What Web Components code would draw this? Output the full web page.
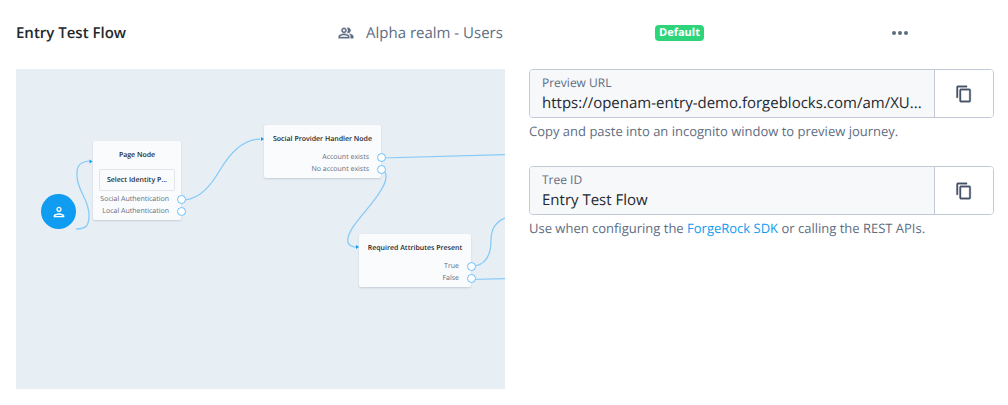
<!DOCTYPE html>
<html lang="en">
<head>
<meta charset="utf-8">
<title>Entry Test Flow</title>
<style>
  body {
    margin: 0;
    background: #fff;
    color: #23282e;
    font: 13px/20px "Open Sans", "Noto Sans", sans-serif;
    text-rendering: geometricPrecision;
  }
</style>
</head>
<body>
<journey-page></journey-page>

<script>
const define = (name, html, setup) => {
  const template = document.createElement('template');
  template.innerHTML = html;
  customElements.define(name, class extends HTMLElement {
    constructor() {
      super();
      this.attachShadow({ mode: 'open' }).append(template.content.cloneNode(true));
    }
    connectedCallback() {
      if (setup) setup(this, this.shadowRoot);
    }
  });
};

define('journey-header', `
  <style>
    :host {
      display: grid;
      grid-template-columns: 322fr 317fr 237fr 102fr;
      align-items: center;
      height: 36px;
      color: #5e6d82;
    }
    h1 { margin: 0; font-size: 15px; font-weight: 600; color: #23282e; white-space: nowrap; }
    .realm { display: flex; align-items: center; gap: 12px; font-size: 15px; white-space: nowrap; }
    svg { display: block; fill: currentColor; }
    .badge {
      display: block;
      width: fit-content;
      padding: 0 4px;
      border-radius: 4px;
      background: #2ed47a;
      color: #fff;
      font-size: 11px;
      line-height: 16px;
      font-weight: 700;
    }
    button { display: block; padding: 0; border: 0; background: none; color: inherit; }
  </style>
  <h1><slot name="title"></slot></h1>
  <div class="realm">
    <svg width="16" height="16" viewBox="0 0 24 24" aria-hidden="true"><path stroke="currentColor" stroke-width=".5" d="M16.67 13.13C18.04 14.06 19 15.32 19 17v3h4v-3c0-2.18-3.57-3.47-6.33-3.87zM15 12c2.21 0 4-1.79 4-4s-1.79-4-4-4c-.47 0-.91.1-1.33.24C14.5 5.27 15 6.58 15 8s-.5 2.73-1.33 3.76c.42.14.86.24 1.33.24zM9 12c2.21 0 4-1.79 4-4s-1.79-4-4-4-4 1.79-4 4 1.79 4 4 4zm0-6c1.1 0 2 .9 2 2s-.9 2-2 2-2-.9-2-2 .9-2 2-2zM9 13c-2.67 0-8 1.34-8 4v3h16v-3c0-2.66-5.33-4-8-4zm6 5H3v-.99C3.2 16.29 6.3 15 9 15s5.8 1.29 6 2v1z"/></svg>
    <slot name="realm"></slot>
  </div>
  <div><span class="badge"><slot name="status"></slot></span></div>
  <div><button type="button" aria-label="More actions">
    <svg width="16" height="16" viewBox="0 0 16 16"><circle cx="2" cy="8" r="2"/><circle cx="8" cy="8" r="2"/><circle cx="14" cy="8" r="2"/></svg>
  </button></div>
`);

define('node-outcome', `
  <style>
    :host { display: flex; align-items: center; justify-content: flex-end; gap: 8px; height: 12px; margin-right: -5px; font-size: 7px; line-height: 12px; color: #5e6d82; white-space: nowrap; }
    span { padding-top: 2px; }
    i { box-sizing: border-box; width: 9px; height: 9px; border: 1px solid #6fc0f7; border-radius: 50%; background: #fff; }
  </style>
  <span><slot></slot></span><i></i>
`);

define('flow-node', `
  <style>
    :host {
      display: block;
      box-sizing: border-box;
      padding: 8px 0 3px;
      border-radius: 2px;
      background: #fafbfc;
      box-shadow: 0 1px 2px rgba(60, 80, 105, .2);
      text-align: center;
    }
    h2 { margin: 0; font-size: 7px; line-height: 14px; font-weight: 600; white-space: nowrap; }
    .outcomes { margin-top: 4px; }
    ::slotted([slot=step]) {
      display: block;
      box-sizing: border-box;
      height: 22px;
      margin: 6px 6px 0;
      border: 1px solid #e1e5ea;
      border-radius: 2px;
      font-size: 7px;
      line-height: 22px;
      font-weight: 600;
      white-space: nowrap;
    }
    :host(.page) .outcomes { margin-top: 2px; }
  </style>
  <h2><slot name="title"></slot></h2>
  <slot name="step"></slot>
  <div class="outcomes"><slot></slot></div>
`);

define('flow-canvas', `
  <style>
    :host { display: block; position: relative; overflow: hidden; min-height: 320px; background: #e7eef4; }
    .links { position: absolute; left: 0; top: 0; fill: none; stroke: #86caf8; stroke-width: 1.25; }
    .links .tips { fill: #109cf1; stroke: none; }
    .start { position: absolute; left: 25px; top: 125px; width: 35px; height: 35px; border-radius: 50%; background: #109cf1; display: grid; place-items: center; }
    flow-node { position: absolute; }
    .page { left: 77px; top: 72px; width: 88px; }
    .social { left: 248px; top: 56px; width: 117px; }
    .required { left: 343px; top: 165px; width: 112px; }
  </style>
  <svg class="links" width="489" height="320" viewBox="0 0 489 320" aria-hidden="true">
    <path d="M60 160C71 160 73 156 73 146C73 138 69 130 67 126C64 120 60 112 61 104C61 96 65 93 73 92"/>
    <path d="M169 131C184 129 194 118 204 101C214 84 228 70 244 70"/>
    <path d="M365 89L489 85.5"/>
    <path d="M366 101C372 103 371 112 365 121C358 135 334 156 332 169C331 175 334 178 341 178"/>
    <path d="M459 197C470 195 475 185 475 171C475 160 479 153 489 149"/>
    <path d="M455 210.500L489 209.500"/>
    <path class="tips" d="M73.500 90.500l3 2-3 2zM245 68l3 2-3 2zM340 176l3 2-3 2z"/>
  </svg>
  <div class="start">
    <svg width="16" height="16" viewBox="0 0 24 24" fill="#fff" aria-hidden="true"><path d="M12 6c1.100 0 2 .9 2 2s-.9 2-2 2-2-.9-2-2 .9-2 2-2m0 10c2.700 0 5.800 1.290 6 2H6c.23-.72 3.310-2 6-2m0-12C9.790 4 8 5.790 8 8s1.790 4 4 4 4-1.790 4-4-1.790-4-4-4zm0 10c-2.670 0-8 1.340-8 4v2h16v-2c0-2.660-5.330-4-8-4z"/></svg>
  </div>
  <flow-node class="page">
    <span slot="title">Page Node</span>
    <span slot="step">Select Identity P...</span>
    <node-outcome>Social Authentication</node-outcome>
    <node-outcome>Local Authentication</node-outcome>
  </flow-node>
  <flow-node class="social">
    <span slot="title">Social Provider Handler Node</span>
    <node-outcome>Account exists</node-outcome>
    <node-outcome>No account exists</node-outcome>
  </flow-node>
  <flow-node class="required">
    <span slot="title">Required Attributes Present</span>
    <node-outcome>True</node-outcome>
    <node-outcome>False</node-outcome>
  </flow-node>
`);

define('copy-field', `
  <style>
    :host { display: block; color: #5e6d82; }
    .group { display: flex; box-sizing: border-box; height: 49px; border: 1px solid #c0c9d5; border-radius: 4px; overflow: hidden; }
    .text { flex: 1; min-width: 0; padding: 4px 12px 0; background: #f6f8fa; }
    label { display: block; font-size: 12px; line-height: 18px; }
    input {
      display: block; width: 100%; height: 22px; padding: 0; border: 0; outline: 0;
      background: none; color: #23282e; font: inherit; font-size: 15px; line-height: 22px;
      text-overflow: ellipsis; text-rendering: inherit;
    }
    button { display: grid; place-items: center; width: 59px; padding: 0; border: 0; border-left: 1px solid #c0c9d5; background: #fff; color: #455469; }
    p { margin: 3px 0 0; font-size: 13px; line-height: 20px; }
  </style>
  <div class="group">
    <div class="text"><label for="value"></label><input id="value" type="text" readonly></div>
    <button type="button" aria-label="Copy">
      <svg width="18" height="18" viewBox="0 0 24 24" fill="currentColor" stroke="currentColor" stroke-width=".5"><path d="M16 1H4c-1.100 0-2 .9-2 2v14h2V3h12V1zm3 4H8c-1.100 0-2 .9-2 2v14c0 1.100.9 2 2 2h11c1.100 0 2-.9 2-2V7c0-1.100-.9-2-2-2zm0 16H8V7h11v14z"/></svg>
    </button>
  </div>
  <p><slot></slot></p>
`, (host, root) => {
  root.querySelector('label').textContent = host.getAttribute('label');
  root.querySelector('input').value = host.getAttribute('value');
});

define('journey-page', `
  <style>
    :host { display: block; padding: 15px 14px 16px 16px; }
    .body { display: grid; grid-template-columns: 489fr 465fr; column-gap: 24px; margin-top: 18px; }
    .details { display: flex; flex-direction: column; gap: 25px; }
    a { color: #109cf1; text-decoration: none; }
  </style>
  <journey-header>
    <span slot="title">Entry Test Flow</span>
    <span slot="realm">Alpha realm - Users</span>
    <span slot="status">Default</span>
  </journey-header>
  <div class="body">
    <flow-canvas></flow-canvas>
    <div class="details">
      <copy-field label="Preview URL" value="https://openam-entry-demo.forgeblocks.com/am/XU...">Copy and paste into an incognito window to preview journey.</copy-field>
      <copy-field label="Tree ID" value="Entry Test Flow">Use when configuring the <a href="#sdk">ForgeRock SDK</a> or calling the REST APIs.</copy-field>
    </div>
  </div>
`);
</script>
</body>
</html>
